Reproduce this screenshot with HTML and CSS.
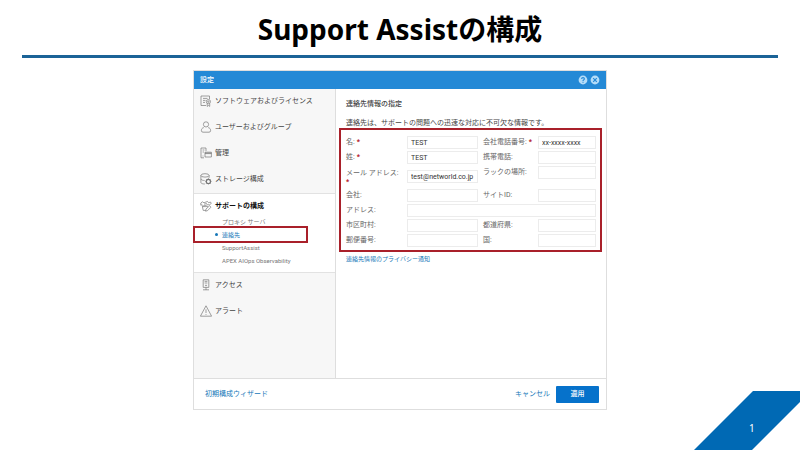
FILE: index.html
```
<!DOCTYPE html>
<html lang="ja">
<head>
    <meta charset="UTF-8">
    <meta name="viewport" content="width=device-width, initial-scale=1.0">
    <title>Support Assistの構成</title>
    <link rel="stylesheet" href="styles.css">
</head>
<body>
    <header class="slide-header">
        <h1><span class="latin">Support Assist</span>の構成</h1>
    </header>

    <main class="dialog">
        <div class="dialog-title">
            <h2>設定</h2>
            <button type="button" class="round-button" aria-label="ヘルプ">
                <svg viewBox="0 0 10 10"><circle cx="5" cy="5" r="4.4" fill="#b4dcf8"/><path d="M3.6 4 Q3.6 2.6 5 2.6 Q6.4 2.6 6.4 3.8 Q6.4 4.5 5.6 4.9 Q5 5.2 5 5.9 M5 6.8 V7.8" fill="none" stroke="#2489d6" stroke-width="1.1"/></svg>
            </button>
            <button type="button" class="round-button" aria-label="閉じる">
                <svg viewBox="0 0 10 10"><circle cx="5" cy="5" r="4.4" fill="#b4dcf8"/><path d="M3.2 3.2 L6.8 6.8 M6.8 3.2 L3.2 6.8" stroke="#2489d6" stroke-width="1.2"/></svg>
            </button>
        </div>

        <div class="dialog-body">
            <nav class="sidebar">
                <a class="menu-item" href="#">
                    <svg class="icon" viewBox="0 0 12 12"><path d="M6 10.5 H1 V1 H9.5 V4 M3 3.4 H7.5 M3 5.4 H5.5 M3 7.4 H5"/><circle cx="8.4" cy="6.6" r="2.1"/><circle cx="8.4" cy="6.6" r=".7"/><path d="M7.2 8.5 V11.4 L8.4 10.5 L9.7 11.4 V8.5"/></svg>
                    ソフトウェアおよびライセンス
                </a>
                <a class="menu-item" href="#">
                    <svg class="icon" viewBox="0 0 12 12"><circle cx="6" cy="3.4" r="2.6"/><path d="M3.8 6.6 C2 7 1.4 8 1.4 9.6 Q1.4 11.2 3 11.2 H9 Q10.6 11.2 10.6 9.6 C10.6 8 10 7 8.2 6.6"/></svg>
                    ユーザーおよびグループ
                </a>
                <a class="menu-item" href="#">
                    <svg class="icon" viewBox="0 0 12 12"><path d="M4 10.8 H1 V1 H6 V4 M2.6 3 H4.4 M2.6 5 H4 M2.6 9 H3.4"/><path d="M5 5.2 H11.4 V10 H5 Z M5 6.6 H11.4 M5 6 H11.4"/></svg>
                    管理
                </a>
                <a class="menu-item" href="#">
                    <svg class="icon" viewBox="0 0 12 12"><ellipse cx="5" cy="2.4" rx="4.1" ry="1.7"/><path d="M.9 2.4 V9.6 C1.2 10.6 3 11 4.8 11 M9.1 2.4 V4.8 M.9 6 C1.6 7.2 3 7.5 4.6 7.5"/><circle cx="8.4" cy="8.4" r="2.1" stroke-width="1.2"/><path d="M8.4 5.2 V6.3 M8.4 10.5 V11.6 M5.2 8.4 H6.3 M10.5 8.4 H11.6 M6.2 6.2 L6.9 6.9 M9.9 9.9 L10.6 10.6 M6.2 10.6 L6.9 9.9 M9.9 6.9 L10.6 6.2"/></svg>
                    ストレージ構成
                </a>

                <div class="menu-open">
                    <a class="menu-item menu-item-open" href="#">
                        <svg class="icon" viewBox="0 0 12 12"><path d="M.8 3 L2.4 1.8 L4 2.8 L7.5 1.4 L8.6 2.8 L10.4 2 L11.3 3.4 L9.2 5 L8 4.6 L3.4 6 L2.2 4.8 L.8 5.2 Z M2 6.6 H8 M2.4 6.6 L3.2 10.4 L5.6 10.4 M5.6 11.2 L6 9 L9.6 5.8 L11 7.2 L7.6 10.6 Z M4 4.2 L6.8 3.4"/></svg>
                        サポートの構成
                    </a>
                    <ul class="submenu">
                        <li><a href="#">プロキシ サーバ</a></li>
                        <li class="current"><a href="#">連絡先</a></li>
                        <li><a href="#">SupportAssist</a></li>
                        <li><a href="#">APEX AIOps Observability</a></li>
                    </ul>
                </div>

                <a class="menu-item" href="#">
                    <svg class="icon" viewBox="0 0 12 12"><path d="M3.2 .8 H8.8 V8.4 H3.2 Z M4.6 2.4 H7.4 M4.6 4 H7.4 M6 8.4 V10.8 M3 10.8 H9"/><circle cx="6" cy="6.4" r=".5"/></svg>
                    アクセス
                </a>
                <a class="menu-item" href="#">
                    <svg class="icon" viewBox="0 0 12 12"><path d="M6 .8 L11.6 11.2 H.4 Z M6 4.4 V8 M6 9.2 V10"/></svg>
                    アラート
                </a>
            </nav>

            <section class="content">
                <h3>連絡先情報の指定</h3>
                <p>連絡先は、サポートの問題への迅速な対応に不可欠な情報です。</p>

                <form class="contact-form" id="contactForm">
                    <label for="first">名:<b>*</b></label>
                    <input type="text" id="first" value="TEST">
                    <label for="phone">会社電話番号:<b>*</b></label>
                    <input type="text" id="phone" value="xx-xxxx-xxxx">

                    <label for="last">姓:<b>*</b></label>
                    <input type="text" id="last" value="TEST">
                    <label for="mobile">携帯電話:</label>
                    <input type="text" id="mobile">

                    <label for="mail" class="two-lines">メール アドレス: <b>*</b></label>
                    <input type="text" id="mail" class="mail" value="test@networld.co.jp">
                    <label for="rack">ラックの場所:</label>
                    <input type="text" id="rack">

                    <label for="company">会社:</label>
                    <input type="text" id="company">
                    <label for="site">サイトID:</label>
                    <input type="text" id="site">

                    <label for="address">アドレス:</label>
                    <input type="text" id="address" class="wide">

                    <label for="city">市区町村:</label>
                    <input type="text" id="city">
                    <label for="state">都道府県:</label>
                    <input type="text" id="state">

                    <label for="zip">郵便番号:</label>
                    <input type="text" id="zip">
                    <label for="country">国:</label>
                    <input type="text" id="country">
                </form>

                <a class="privacy" href="#">連絡先情報のプライバシー通知</a>
            </section>
        </div>

        <footer class="dialog-footer">
            <a href="#">初期構成ウィザード</a>
            <button type="button" class="cancel">キャンセル</button>
            <button type="submit" class="apply" form="contactForm">適用</button>
        </footer>
    </main>

    <div class="page-corner">
        <svg viewBox="0 0 106 59"><path d="M59 0 H106 V11 L58 59 H0 Z" fill="#0069b4"/></svg>
        <span>1</span>
    </div>
</body>
</html>
```

FILE: styles.css
```
*, *::before, *::after { margin: 0; padding: 0; box-sizing: border-box; }
body { position: relative; min-height: 100vh; overflow: hidden; background: #fff; color: #444; font-family: Roboto, "Noto Sans CJK JP", sans-serif; font-size: 7px; line-height: 10px; }
a { color: inherit; text-decoration: none; }
button { border: none; background: none; font: inherit; cursor: pointer; }

.slide-header { margin: 0 22px; height: 58px; border-bottom: 3px solid #1b6397; text-align: center; }
h1 { color: #000; font: bold 28px/56px "Noto Sans CJK JP", sans-serif; }
h1 .latin { font-family: "Noto Sans", sans-serif; }

.dialog { width: 100%; max-width: 414px; margin: 12px auto 0; border: 1px solid #dedede; background: #fff; }
.dialog-title { display: flex; align-items: center; gap: 2px; height: 18px; padding: 0 6px; background: #2489d6; color: #fff; }
.dialog-title h2 { flex: 1; font-size: 7px; font-weight: 500; }
.round-button { width: 10px; height: 10px; }
.round-button svg { display: block; }

.dialog-body { display: flex; min-height: 289px; }
.sidebar { width: 142px; border-right: 1px solid #dedede; background: #f7f7f7; }
.menu-item { display: flex; align-items: center; gap: 3px; height: 26px; padding: 0 0 2px 6px; }
.icon { width: 12px; height: 12px; fill: none; stroke: #777; stroke-width: 0.7; }
.menu-open { padding: 2px 0 5px; border-top: 1px solid #e2e2e2; border-bottom: 1px solid #e2e2e2; background: #fff; }
.menu-item-open { height: 19px; padding-bottom: 0; color: #111; font-weight: bold; }
.submenu { list-style: none; font-size: 6px; line-height: 13px; color: #777; }
.submenu li { position: relative; height: 13px; padding-left: 28px; }
.submenu .current { color: #1577b8; }
.submenu .current a::before { content: ""; position: absolute; left: 21px; top: 5px; width: 3px; height: 3px; border-radius: 50%; background: #1577b8; }
.submenu .current::after { content: ""; position: absolute; left: -1px; top: -2px; width: 115px; height: 17px; border: 2px solid #a9202a; }

.content { flex: 1; padding: 10px 4px 0 3px; }
.content h3, .content p { padding-left: 7px; font-size: 7px; line-height: 10px; }
.content h3 { margin-bottom: 9px; font-weight: 500; }
.contact-form { display: grid; grid-template-columns: 56px 71px 50px 1fr; column-gap: 5px; row-gap: 2px; align-items: start; padding: 6px 4px 3px 5px; border: 2px solid #a9202a; }
.contact-form label { height: 13px; line-height: 13px; color: #666; white-space: nowrap; }
.contact-form b { margin-left: 2px; color: #b3121d; }
.contact-form .two-lines { height: 21px; padding-top: 2px; line-height: 10px; white-space: normal; }
.contact-form .two-lines b { display: block; margin-left: 0; line-height: 8px; }
.contact-form input { width: 100%; height: 13px; padding: 0 3px; border: 1px solid #ececec; background: #fff; color: #333; font: inherit; }
.contact-form .mail { align-self: center; }
.contact-form .wide { grid-column: span 3; }
.privacy { display: block; margin-top: 2px; padding-left: 7px; color: #1577b8; font-size: 6px; }

.dialog-footer { display: flex; align-items: center; gap: 6px; height: 31px; padding: 0 7px 0 11px; border-top: 1px solid #dedede; color: #1577b8; }
.dialog-footer a { flex: 1; }
.cancel { color: #1577b8; }
.apply { width: 43px; height: 17px; border-radius: 1px; background: #0672cb; color: #fff; font-weight: 500; }

.page-corner { position: absolute; right: 0; bottom: 0; width: 106px; height: 59px; color: #fff; }
.page-corner svg { display: block; }
.page-corner span { position: absolute; left: 55px; top: 31px; font: 10px/12px "Noto Sans", sans-serif; }
```
